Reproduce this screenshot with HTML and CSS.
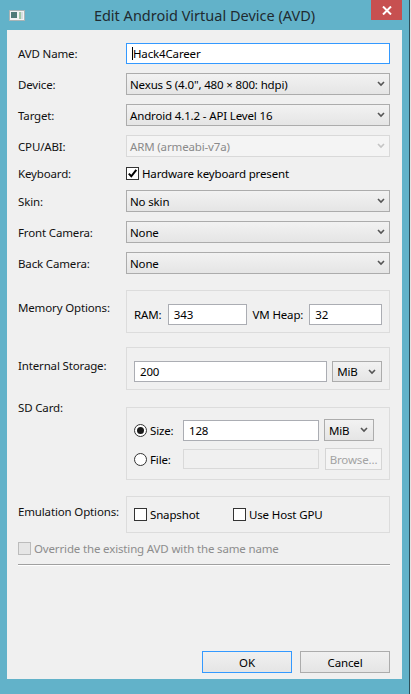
FILE: index.html
```html
<!DOCTYPE html>
<html>
<head>
<meta charset="utf-8">
<title>Edit Android Virtual Device (AVD)</title>
<link rel="stylesheet" href="styles.css">
</head>
<body>
<div class="screen">
  <div class="window">
    <div class="titlebar">
      <svg class="appicon" width="16" height="11" viewBox="0 0 16 11">
        <rect x="0.5" y="0.5" width="15" height="10" fill="#f2f4f4" stroke="#a9b4b6"/>
        <rect x="2" y="2" width="6" height="6" fill="#4e7b78"/>
        <rect x="10" y="2" width="2" height="7" fill="#9fc8a8"/>
        <rect x="12" y="2" width="2" height="7" fill="#d6dee0"/>
      </svg>
      <div class="title">Edit Android Virtual Device (AVD)</div>
      <div class="close">
        <svg width="10" height="9" viewBox="0 0 10 9"><path d="M1 0.5 L9 8.5 M9 0.5 L1 8.5" stroke="#fff" stroke-width="2"/></svg>
      </div>
    </div>
    <div class="panel">
      <div class="row">
        <div class="lbl">AVD Name:</div>
        <div class="tb tb-focus field"><span class="caret"></span>Hack4Career</div>
      </div>
      <div class="row">
        <div class="lbl">Device:</div>
        <div class="combo field"><span>Nexus S (4.0&quot;, 480 × 800: hdpi)</span><svg class="arrow" width="8" height="6" viewBox="0 0 8 6"><path d="M1 1 L4 4 L7 1" fill="none" stroke="#555" stroke-width="1.6"/></svg></div>
      </div>
      <div class="row">
        <div class="lbl">Target:</div>
        <div class="combo field"><span>Android 4.1.2 - API Level 16</span><svg class="arrow" width="8" height="6" viewBox="0 0 8 6"><path d="M1 1 L4 4 L7 1" fill="none" stroke="#555" stroke-width="1.6"/></svg></div>
      </div>
      <div class="row">
        <div class="lbl">CPU/ABI:</div>
        <div class="combo combo-dis field"><span>ARM (armeabi-v7a)</span><svg class="arrow" width="8" height="6" viewBox="0 0 8 6"><path d="M1 1 L4 4 L7 1" fill="none" stroke="#c4c4c4" stroke-width="1.6"/></svg></div>
      </div>
      <div class="row row-kb">
        <div class="lbl">Keyboard:</div>
        <div class="check-item"><span class="cb"><svg width="11" height="11" viewBox="0 0 11 11"><path d="M1.8 5.6 L4.3 8.3 L9.3 1.8" fill="none" stroke="#000" stroke-width="2"/></svg></span>Hardware keyboard present</div>
      </div>
      <div class="row">
        <div class="lbl">Skin:</div>
        <div class="combo field"><span>No skin</span><svg class="arrow" width="8" height="6" viewBox="0 0 8 6"><path d="M1 1 L4 4 L7 1" fill="none" stroke="#555" stroke-width="1.6"/></svg></div>
      </div>
      <div class="row">
        <div class="lbl">Front Camera:</div>
        <div class="combo field"><span>None</span><svg class="arrow" width="8" height="6" viewBox="0 0 8 6"><path d="M1 1 L4 4 L7 1" fill="none" stroke="#555" stroke-width="1.6"/></svg></div>
      </div>
      <div class="row">
        <div class="lbl">Back Camera:</div>
        <div class="combo field"><span>None</span><svg class="arrow" width="8" height="6" viewBox="0 0 8 6"><path d="M1 1 L4 4 L7 1" fill="none" stroke="#555" stroke-width="1.6"/></svg></div>
      </div>

      <div class="row row-grp row-mem">
        <div class="lbl">Memory Options:</div>
        <div class="grp grp-mem field">
          <span class="sublbl sub-ram">RAM:</span>
          <div class="tb tb-ram">343</div>
          <span class="sublbl sub-heap">VM Heap:</span>
          <div class="tb tb-heap">32</div>
        </div>
      </div>

      <div class="row row-grp row-int">
        <div class="lbl">Internal Storage:</div>
        <div class="grp grp-int field">
          <div class="tb tb-int">200</div>
          <div class="combo combo-unit"><span>MiB</span><svg class="arrow" width="8" height="6" viewBox="0 0 8 6"><path d="M1 1 L4 4 L7 1" fill="none" stroke="#555" stroke-width="1.6"/></svg></div>
        </div>
      </div>

      <div class="row row-grp row-sd">
        <div class="lbl">SD Card:</div>
        <div class="grp grp-sd field">
          <div class="sd-line">
            <span class="radio radio-on"><span class="dot"></span></span>
            <span class="sd-lbl">Size:</span>
            <div class="tb tb-sd">128</div>
            <div class="combo combo-unit combo-sd"><span>MiB</span><svg class="arrow" width="8" height="6" viewBox="0 0 8 6"><path d="M1 1 L4 4 L7 1" fill="none" stroke="#555" stroke-width="1.6"/></svg></div>
          </div>
          <div class="sd-line sd-line2">
            <span class="radio"></span>
            <span class="sd-lbl">File:</span>
            <div class="tb tb-sd tb-dis"></div>
            <div class="btn btn-dis">Browse...</div>
          </div>
        </div>
      </div>

      <div class="row row-grp row-emu">
        <div class="lbl">Emulation Options:</div>
        <div class="grp grp-emu field">
          <div class="check-item snap"><span class="cb"></span>Snapshot</div>
          <div class="check-item"><span class="cb"></span>Use Host GPU</div>
        </div>
      </div>

      <div class="row row-over">
        <div class="check-item dis"><span class="cb cb-dis"></span>Override the existing AVD with the same name</div>
      </div>

      <div class="sep"></div>

      <div class="buttons">
        <div class="btn btn-ok">OK</div>
        <div class="btn">Cancel</div>
      </div>
    </div>
  </div>
  <div class="edge"></div>
</div>
</body>
</html>
```

FILE: styles.css
```css
* { box-sizing: border-box; }
html, body { margin: 0; padding: 0; }
body {
  width: 411px;
  height: 694px;
  overflow: hidden;
  background: #62b2c9;
  font-family: "Noto Sans", "Open Sans", sans-serif;
  font-size: 11.5px;
  letter-spacing: -0.15px;
  color: #000;
}
.screen { display: flex; height: 694px; }
.window {
  width: 409px;
  height: 694px;
  display: flex;
  flex-direction: column;
  background: #62b2c9;
  padding: 0 7px 15px 7px;
}
.edge {
  width: 2px;
  background: linear-gradient(to right, #2f4f5a 0 1px, #e4e4e4 1px);
}
.titlebar {
  height: 30px;
  flex: none;
  display: grid;
  grid-template-columns: 1fr auto 1fr;
  align-items: start;
}
.appicon { margin: 10px 0 0 2px; justify-self: start; }
.title {
  font-size: 14.5px;
  letter-spacing: 0;
  line-height: 20px;
  margin-top: 5px;
  color: #1f2b30;
  white-space: nowrap;
}
.close {
  justify-self: end;
  width: 31px;
  height: 20px;
  background: #c75050;
  display: flex;
  align-items: center;
  justify-content: center;
}
.panel {
  flex: 1;
  background: #f0f0f0;
  display: flex;
  flex-direction: column;
  padding: 13px 12px 6px 11px;
}
.row { display: flex; align-items: center; margin-top: 9px; }
.row:first-child { margin-top: 0; }
.lbl { width: 108px; flex: none; line-height: 15px; color: #111; white-space: nowrap; }
.field { width: 264px; flex: none; }

.tb {
  height: 21px;
  border: 1px solid #abadb3;
  background: #fff;
  display: flex;
  align-items: center;
  padding: 0 5px;
  white-space: nowrap;
}
.tb-focus { border-color: #3399ff; padding-left: 5px; }
.caret { width: 1px; height: 13px; background: #000; margin-right: 0; }
.combo {
  height: 22px;
  border: 1px solid #acacac;
  background: linear-gradient(#f2f2f2, #e5e5e5);
  display: flex;
  align-items: center;
  justify-content: space-between;
  padding: 0 4px 0 3px;
  white-space: nowrap;
}
.combo-dis { border-color: #d9d9d9; background: #f4f4f4; color: #8a8a8a; }
.arrow { flex: none; }
.row-kb { height: 15px; }
.check-item { display: flex; align-items: center; line-height: 15px; white-space: nowrap; }
.cb {
  width: 13px;
  height: 13px;
  border: 1px solid #333;
  background: #fff;
  margin-right: 3px;
  display: flex;
  align-items: center;
  justify-content: center;
  flex: none;
}
.cb-dis { border-color: #bcbcbc; background: #e6e6e6; }
.dis { color: #8d8d8d; }

.row-grp { align-items: flex-start; }
.grp { border: 1px solid #dcdcdc; display: flex; align-items: center; }
.row-mem { margin-top: 16px; }
.row-mem .lbl { padding-top: 10px; }
.grp-mem { height: 43px; padding: 13px 7px 7px 7px; align-items: flex-start; }
.sublbl { line-height: 21px; white-space: nowrap; }
.sub-ram { width: 34px; }
.tb-ram { width: 79px; }
.sub-heap { width: 57px; margin-left: 6px; }
.tb-heap { width: 73px; }

.row-int { margin-top: 14px; }
.row-int .lbl { padding-top: 11px; }
.grp-int { height: 43px; padding: 13px 7px 7px 7px; align-items: flex-start; }
.tb-int { width: 194px; }
.combo-unit { width: 50px; margin-left: 5px; height: 21px; padding-left: 4px; padding-right: 5px; }

.row-sd { margin-top: 10px; }
.grp-sd {
  margin-top: 7px;
  height: 73px;
  flex-direction: column;
  align-items: stretch;
  padding: 11px 7px 8px 7px;
}
.sd-line { display: flex; align-items: center; height: 22px; }
.sd-line2 { margin-top: 7px; }
.radio {
  width: 13px;
  height: 13px;
  border: 1px solid #333;
  border-radius: 50%;
  background: #fff;
  display: flex;
  align-items: center;
  justify-content: center;
  flex: none;
}
.dot { width: 7px; height: 7px; border-radius: 50%; background: #1a1a1a; }
.sd-lbl { width: 36px; padding-left: 3px; }
.tb-sd { width: 136px; }
.tb-dis { border-color: #d9d9d9; background: #f0f0f0; height: 20px; }
.combo-sd { margin-left: 5px; height: 22px; }

.row-emu { margin-top: 16px; }
.row-emu .lbl { padding-top: 8px; }
.grp-emu { height: 37px; padding: 10px 7px 9px 7px; align-items: flex-start; }
.snap { width: 99px; }

.row-over { margin-top: 8px; }

.sep { height: 1px; background: #a0a0a0; margin-top: 8px; box-shadow: 0 1px 0 #fff; }

.buttons { margin-top: auto; display: flex; justify-content: flex-end; gap: 8px; }
.btn {
  width: 90px;
  height: 22px;
  border: 1px solid #acacac;
  background: linear-gradient(#f0f0f0, #e5e5e5);
  display: flex;
  align-items: center;
  justify-content: center;
  white-space: nowrap;
}
.btn-ok { border-color: #3399ff; }
.btn-dis {
  width: 57px;
  margin-left: 6px;
  color: #a3a3a3;
  border-color: #d5d5d5;
  background: #f4f4f4;
}
```
